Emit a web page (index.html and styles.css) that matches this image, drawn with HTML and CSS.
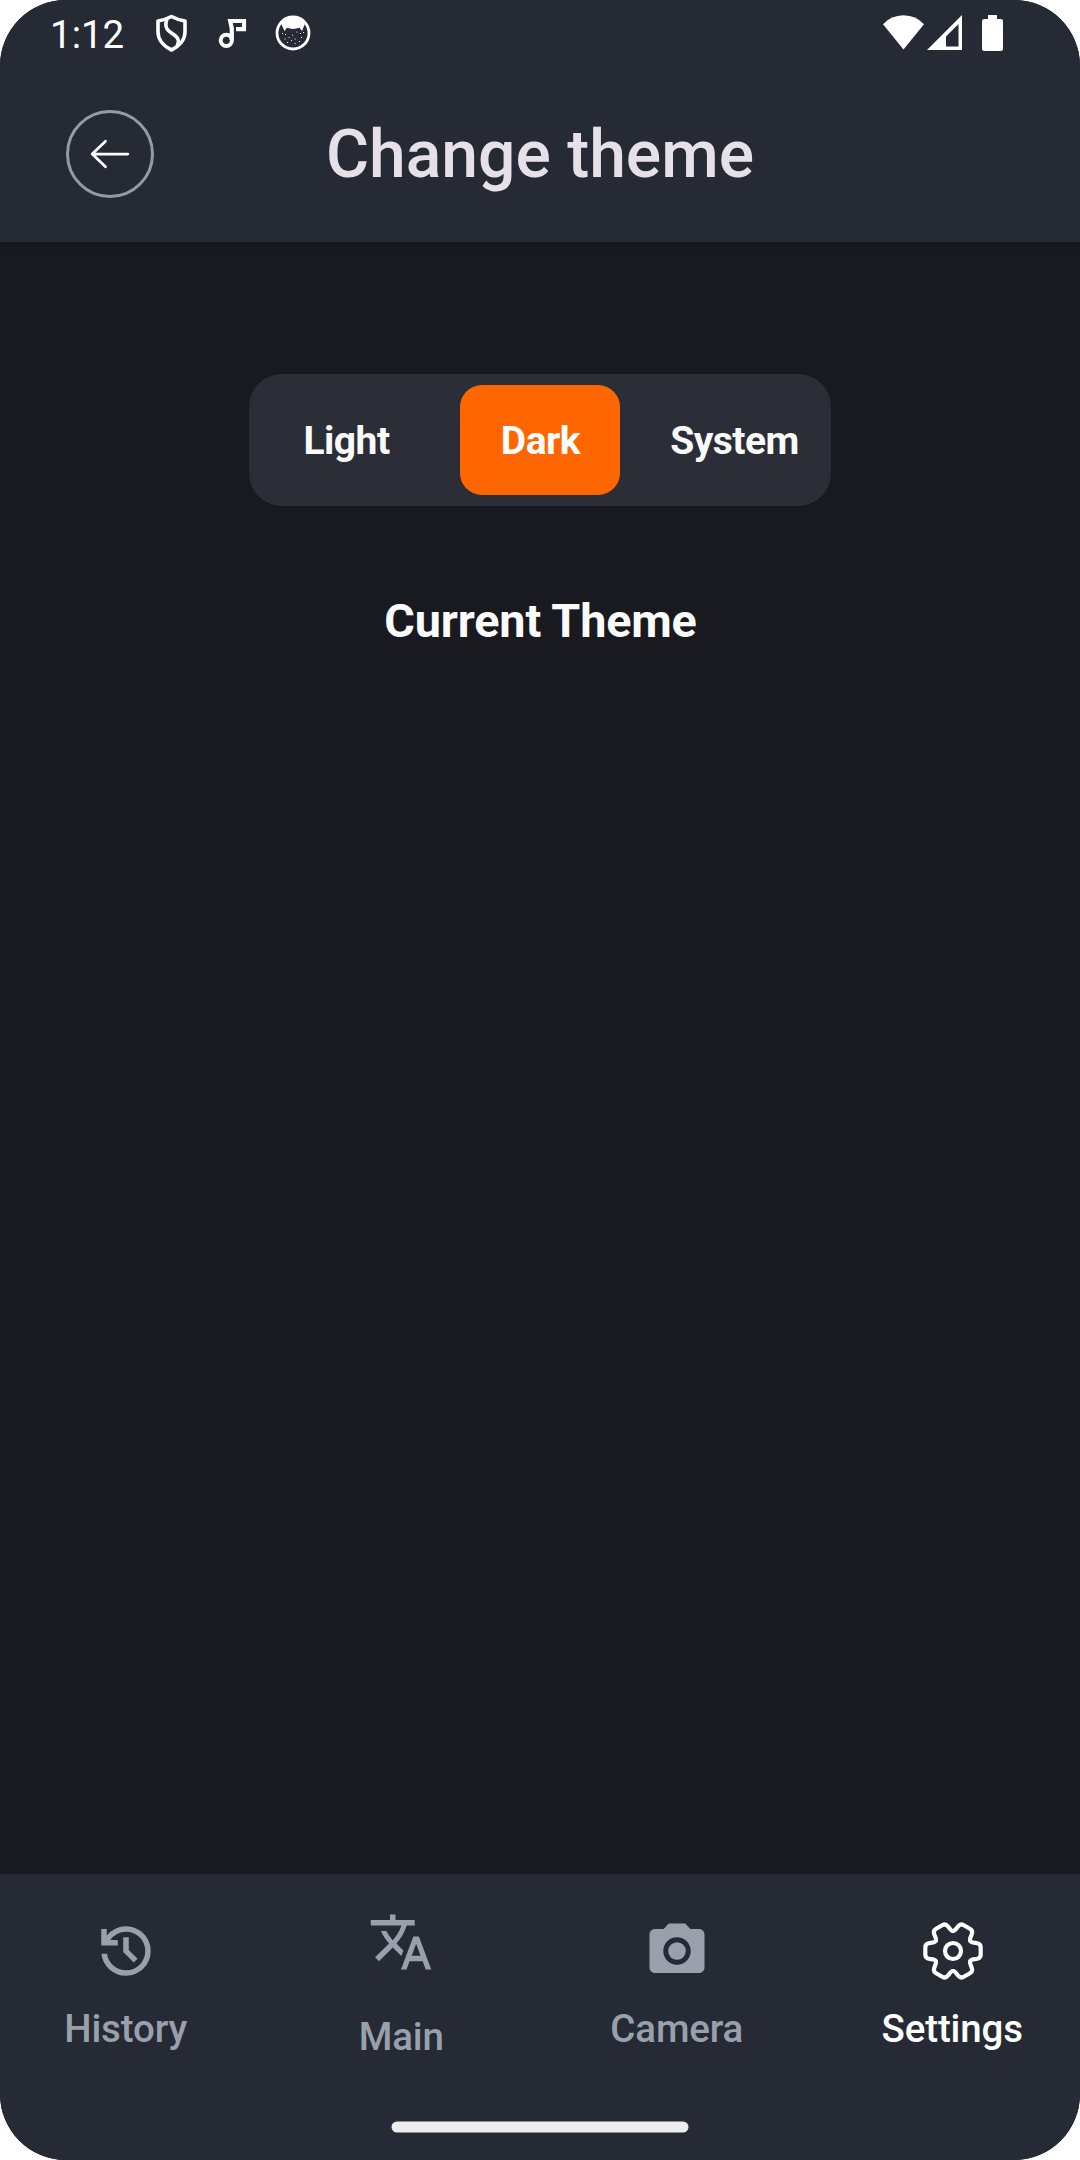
FILE: index.html
```html
<!DOCTYPE html>
<html lang="en">
<head>
<meta charset="utf-8">
<title>Change theme</title>
<link rel="stylesheet" href="styles.css">
</head>
<body>
<div class="screen">
  <div class="status-bar">
    <span class="clock">1:12</span>
    <svg class="status-icon shield" width="36" height="40" viewBox="153 14 36 40" fill="none" stroke="#fff" stroke-width="3.6" stroke-linejoin="round"><path d="M171.500 17.500 Q165 21 158 22 V33 C158 41 164 47.500 171.500 51 C179 47.500 185 41 185 33 V22 Q178 21 171.500 17.500Z"/><path d="M167 20 C163 30 170 33 175 36.500 C179.500 40 179 43 177 47"/></svg>
    <svg class="status-icon note" width="30" height="34" viewBox="217 16 30 34" fill="none" stroke="#fff"><circle cx="226.300" cy="40.300" r="5.600" stroke-width="4"/><path d="M231.800 40V28.500L230.200 21H244V29.200H236" stroke-width="4.200"/></svg>
    <svg class="status-icon cat" width="36" height="36" viewBox="275.500 15.500 36 36"><circle cx="293.500" cy="33.500" r="16" fill="none" stroke="#fff" stroke-width="2.800"/><path fill="#fff" d="M281 23 Q293.500 11 306 23 L302.500 31.500 L300 28.300 Q293.500 30.500 287.500 28.300 L285 31.500Z"/><path stroke="#fff" stroke-width="1.100" stroke-linecap="round" d="M283 34h.1M286 35h.1M285.500 39.500h.1M289.500 38h.1M293 35.500h.1M297.500 32.500h.1M301 34h.1M304 33h.1M292 41h.1M295.500 39.500h.1M302 38h.1M288 43h.1M295.500 44h.1M300 42h.1"/></svg>
    <span class="spacer"></span>
    <svg class="status-icon" width="42" height="36" viewBox="883 15 42 36"><path fill="#fff" d="M883 24.200Q891 15.500 903.500 15.300Q916 15.500 924 24.200L903.500 49.500Z"/></svg>
    <svg class="status-icon signal" width="36" height="36" viewBox="927 15 36 36"><path fill="#fff" fill-rule="evenodd" d="M927 50L962 15V50ZM946 46.500H958.500V24L946 36.500Z"/></svg>
    <svg class="status-icon battery" width="22" height="36" viewBox="982 15 22 36"><path fill="#fff" d="M988 15h9v4h3.700q2.300 0 2.300 2.300v27.400q0 2.300-2.300 2.300h-16.400q-2.300 0-2.300-2.300v-27.400q0-2.300 2.300-2.300h3.700z"/></svg>
  </div>

  <header class="header">
    <button class="back" aria-label="Back"><svg width="44" height="44" viewBox="88 132 44 44" fill="none" stroke="#fff" stroke-width="2.750" stroke-linecap="round" stroke-linejoin="round"><path d="M127.800 154H92.200M105.500 141.200L92.200 154L105.500 166.800"/></svg></button>
    <h1 class="title">Change theme</h1>
  </header>

  <main class="content">
    <div class="segments">
      <button class="segment"><span class="pill">Light</span></button>
      <button class="segment"><span class="pill active">Dark</span></button>
      <button class="segment"><span class="pill">System</span></button>
    </div>
    <p class="caption">Current Theme</p>
  </main>

  <nav class="nav">
    <div class="tabs">
      <a class="tab"><svg width="66" height="66" viewBox="0 0 24 24" fill="currentColor"><path d="M12 21q-3.450 0-6.012-2.288T3.050 13H5.100q.350 2.600 2.313 4.300T12 19q2.925 0 4.963-2.037T19 12t-2.037-4.963T12 5q-1.725 0-3.225.8T6.250 8H9v2H3V4h2v2.350q1.275-1.600 3.113-2.475T12 3q1.875 0 3.513.713t2.850 1.925 1.925 2.850T21 12t-.712 3.513-1.925 2.850-2.850 1.925T12 21Zm2.800-4.800L11 12.400V7h2v4.600l3.200 3.200Z"/></svg><span class="label">History</span></a>
      <a class="tab main"><svg width="66" height="66" viewBox="0 0 24 24" fill="currentColor"><path d="M12.870 15.070l-2.540-2.510.03-.03c1.740-1.940 2.980-4.170 3.710-6.530H17V4h-7V2H8v2H1v1.990h11.170C11.500 7.920 10.440 9.750 9 11.350 8.070 10.320 7.300 9.190 6.690 8h-2c.73 1.630 1.730 3.170 2.980 4.560l-5.090 5.020L4 19l5-5 3.110 3.110.76-2.040zM18.500 10h-2L12 22h2l1.120-3h4.750L21 22h2l-4.500-12zm-2.620 7l1.620-4.330L19.120 17h-3.240z"/></svg><span class="label">Main</span></a>
      <a class="tab"><svg width="66" height="66" viewBox="0 0 24 24" fill="currentColor"><path d="M9 2 7.170 4H4c-1.100 0-2 .9-2 2v12c0 1.100.9 2 2 2h16c1.100 0 2-.9 2-2V6c0-1.100-.9-2-2-2h-3.170L15 2H9zm3 15c-2.760 0-5-2.240-5-5s2.240-5 5-5 5 2.240 5 5-2.240 5-5 5z"/><circle cx="12" cy="12" r="3.200"/></svg><span class="label">Camera</span></a>
      <a class="tab selected"><svg width="66" height="66" viewBox="-102 -99 198 198" fill="none" stroke="currentColor" stroke-width="12.500" stroke-linecap="round" stroke-linejoin="round"><defs><path id="tooth" d="M52-30C55-24.800 62-25 70-24Q83-22 83-12V12Q83 22 70 24C62 25 55 24.800 52 30"/></defs><use href="#tooth"/><use href="#tooth" transform="rotate(60)"/><use href="#tooth" transform="rotate(120)"/><use href="#tooth" transform="rotate(180)"/><use href="#tooth" transform="rotate(240)"/><use href="#tooth" transform="rotate(300)"/><circle r="24"/></svg><span class="label">Settings</span></a>
    </div>
    <svg class="home-bar" width="298" height="12" viewBox="0 0 298 12"><rect x=".5" y=".5" width="297" height="11" rx="5.500" fill="#ededed"/></svg>
  </nav>
</div>
</body>
</html>
```

FILE: styles.css
```css
* { box-sizing: border-box; }

body {
  margin: 0;
  background: #fff;
  font-family: Roboto, "Noto Sans", sans-serif;
}

button {
  padding: 0;
  border: 0;
  background: none;
  color: inherit;
  font: inherit;
}

svg { display: block; flex: none; }

.screen {
  width: 1080px;
  height: 2160px;
  border-radius: 66px;
  overflow: hidden;
  display: flex;
  flex-direction: column;
  background: #191a1f;
}

.status-bar {
  height: 66px;
  padding: 0 76px 0 50px;
  display: flex;
  align-items: flex-start;
  background: #262a34;
  color: #fff;
}

.clock {
  width: 103px;
  font-size: 38.500px;
  line-height: 69px;
}

.status-icon { margin-top: 15px; }
.shield { margin-top: 13px; }
.note { margin: 16px 0 0 28px; }
.cat { margin-left: 28px; }
.spacer { flex: 1; }
.signal { margin-left: 2px; }
.battery { margin-left: 19px; }

.header {
  height: 176px;
  padding: 0 66px;
  display: grid;
  grid-template-columns: 88px 1fr 88px;
  align-items: center;
  background: #262a34;
  box-shadow: 0 5px 5px rgba(0, 0, 0, 0.12);
}

.back {
  width: 88px;
  height: 88px;
  border: 3px solid #929ca6;
  border-radius: 50%;
  display: grid;
  place-items: center;
}

.title {
  margin: 0;
  padding-top: 2px;
  text-align: center;
  font-size: 66px;
  font-weight: 500;
  line-height: 78px;
  color: #e6e0e9;
}

.content {
  flex: 1;
  padding-top: 132px;
  display: flex;
  flex-direction: column;
  align-items: center;
}

.segments {
  width: 582px;
  height: 132px;
  border-radius: 33px;
  display: grid;
  grid-template-columns: repeat(3, 1fr);
  background: #2c2e37;
}

.segment { display: grid; place-items: center; }

.pill {
  width: 160px;
  height: 110px;
  padding: 2px 0 0 1px;
  border-radius: 22px;
  display: grid;
  place-items: center;
  font-size: 39px;
  font-weight: 700;
  line-height: 46px;
  letter-spacing: -0.5px;
  color: #fafafa;
}

.active { background: #ff6600; color: #fff; }

.caption {
  margin: 88px 0 0;
  padding-left: 1px;
  font-size: 46.750px;
  font-weight: 700;
  line-height: 54px;
  letter-spacing: -0.15px;
  color: #fafafa;
}

.nav {
  height: 286px;
  padding-bottom: 27px;
  display: flex;
  flex-direction: column;
  align-items: center;
  justify-content: space-between;
  background: #262a34;
}

.tabs {
  width: 1102px;
  margin-right: 2px;
  display: grid;
  grid-template-columns: repeat(4, 1fr);
  color: #98a1ab;
}

.tab {
  padding-top: 44px;
  display: flex;
  flex-direction: column;
  align-items: center;
  gap: 22px;
}

.tab.main { padding-top: 35px; gap: 39px; }
.tab.selected { color: #fff; }

.label {
  font-size: 38.500px;
  font-weight: 500;
  line-height: 46px;
  letter-spacing: -0.15px;
}
```
